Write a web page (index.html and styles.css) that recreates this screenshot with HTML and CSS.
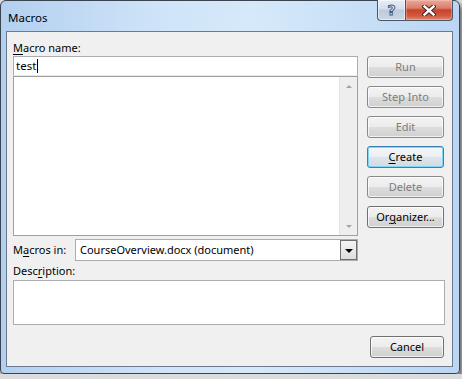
FILE: index.html
```html
<!DOCTYPE html>
<html>

<head>
  <title>Macros</title>
  <link rel="stylesheet" href="styles.css">
</head>

<body>
  <div class="window">
    <div class="titlebar">
      <span class="title">Macros</span>
      <div class="caption">
        <div class="cap-btn help"><span>?</span></div>
        <div class="cap-btn close">
          <svg width="14" height="11" viewBox="0 0 14 11">
            <path d="M2.5 1.5 L11.5 9.5 M11.5 1.5 L2.5 9.5" stroke="#3b2620" stroke-width="4.4" stroke-linecap="square" fill="none"/>
            <path d="M2.5 1.5 L11.5 9.5 M11.5 1.5 L2.5 9.5" stroke="#ffffff" stroke-width="2.4" stroke-linecap="square" fill="none"/>
          </svg>
        </div>
      </div>
    </div>

    <div class="client">
      <div class="main">
        <div class="left">
          <div class="label"><u>M</u>acro name:</div>
          <div class="name-input">test<span class="caret"></span></div>
          <div class="listbox">
            <div class="list-items"></div>
            <div class="scrollbar">
              <span class="arrow up"></span>
              <span class="arrow down"></span>
            </div>
          </div>
          <div class="macros-in">
            <div class="label inline">M<u>a</u>cros in:</div>
            <div class="combo">
              <span class="combo-text">CourseOverview.docx (document)</span>
              <span class="combo-btn"><span class="tri"></span></span>
            </div>
          </div>
        </div>
        <div class="buttons">
          <button class="btn" disabled>Run</button>
          <button class="btn" disabled>Step Into</button>
          <button class="btn" disabled>Edit</button>
          <button class="btn default"><u>C</u>reate</button>
          <button class="btn" disabled>Delete</button>
          <button class="btn">Or<u>g</u>anizer...</button>
        </div>
      </div>

      <div class="label desc-label">Desc<u>r</u>iption:</div>
      <div class="description"></div>

      <div class="footer">
        <button class="btn cancel">Cancel</button>
      </div>
    </div>
  </div>
</body>

</html>
```

FILE: styles.css
```css
body {
  margin: 0;
  background: #dcdcdc;
  font-family: "Noto Sans", "Open Sans", sans-serif;
  font-size: 11px;
  color: #000;
}

u {
  text-decoration-thickness: 1px;
  text-underline-offset: 2px;
}

.window {
  width: 460px;
  height: 374px;
  box-sizing: border-box;
  border: 1px solid #3a4350;
  border-radius: 6px 6px 4px 4px;
  padding: 0 6px 6px 5px;
  display: flex;
  flex-direction: column;
  background: linear-gradient(to right, #b3d0f0 0%, #cfe4f8 35%, #d6e9fa 55%, #bad6f3 100%);
  box-shadow: 2px 4px 5px rgba(0, 0, 0, 0.6);
}

/* title bar */
.titlebar {
  height: 30px;
  display: flex;
  justify-content: space-between;
  align-items: flex-start;
}

.title {
  padding: 9px 0 0 2px;
  line-height: 16px;
  font-size: 11.5px;
}

.caption {
  display: flex;
  margin-top: -1px;
  margin-right: 0;
}

.cap-btn {
  height: 21px;
  box-sizing: border-box;
  border: 1px solid #4b5664;
  border-top: none;
  display: flex;
  align-items: center;
  justify-content: center;
}

.help {
  width: 28px;
  border-right: none;
  border-radius: 0 0 0 4px;
  background: linear-gradient(#e6eef7 0%, #d3deeb 45%, #bccbdc 50%, #c9d7e6 100%);
  box-shadow: inset 0 0 0 1px rgba(255, 255, 255, 0.5);
}

.help span {
  font-family: "DejaVu Sans", sans-serif;
  font-weight: bold;
  font-size: 14px;
  line-height: 14px;
  color: #e9eef4;
  -webkit-text-stroke: 1px #4d5e72;
  margin-top: -1px;
}

.close {
  width: 48px;
  border-radius: 0 0 4px 0;
  background: linear-gradient(#e9a99c 0%, #dc7e6b 40%, #c7432c 50%, #d15a42 80%, #e08a72 100%);
  box-shadow: inset 0 0 0 1px rgba(255, 220, 210, 0.35);
}

/* client area */
.client {
  flex: 1;
  border: 1px solid #6b7a8c;
  background: #f0f0f0;
  padding: 8px 7px 8px 6px;
  display: flex;
  flex-direction: column;
}

.main {
  display: flex;
  gap: 9px;
}

.left {
  width: 345px;
  display: flex;
  flex-direction: column;
}

.label {
  height: 16px;
  line-height: 16px;
}

.name-input {
  height: 20px;
  box-sizing: border-box;
  border: 1px solid #abadb3;
  border-bottom-color: #e3e9ef;
  background: #fff;
  padding: 0 2px;
  line-height: 18px;
  font-size: 11.5px;
  display: flex;
  align-items: center;
}

.caret {
  width: 1px;
  height: 14px;
  background: #000;
  margin-left: 1px;
}

.listbox {
  height: 160px;
  box-sizing: border-box;
  border: 1px solid #a0a0a0;
  background: #fff;
  display: flex;
}

.list-items {
  flex: 1;
}

.scrollbar {
  width: 17px;
  background: #eeeeee;
  border-left: 1px solid #e4e4e4;
  display: flex;
  flex-direction: column;
  justify-content: space-between;
  align-items: center;
  padding: 8px 0 7px;
}

.arrow {
  width: 0;
  height: 0;
  border-left: 3px solid transparent;
  border-right: 3px solid transparent;
}

.arrow.up {
  border-bottom: 3px solid #a3a3a3;
}

.arrow.down {
  border-top: 3px solid #a3a3a3;
}

.macros-in {
  display: flex;
  align-items: center;
  margin-top: 3px;
}

.label.inline {
  width: 62px;
}

.combo {
  flex: 1;
  height: 22px;
  box-sizing: border-box;
  border: 1px solid #abadb3;
  background: #fff;
  display: flex;
  align-items: center;
}

.combo-text {
  flex: 1;
  padding-left: 4px;
  line-height: 18px;
}

.combo-btn {
  width: 17px;
  height: 20px;
  box-sizing: border-box;
  border: 1px solid #6f6f6f;
  background: linear-gradient(#f4f4f4, #dedede);
  display: flex;
  align-items: center;
  justify-content: center;
}

.tri {
  width: 0;
  height: 0;
  border-left: 4px solid transparent;
  border-right: 4px solid transparent;
  border-top: 4px solid #000;
  margin-top: 1px;
}

/* buttons */
.buttons {
  width: 77px;
  display: flex;
  flex-direction: column;
  gap: 8px;
  padding-top: 16px;
}

.btn {
  height: 22px;
  width: 77px;
  box-sizing: border-box;
  border: 1px solid #707070;
  border-radius: 3px;
  background: linear-gradient(#f3f3f3 0%, #ececec 50%, #dddddd 51%, #d0d0d0 100%);
  box-shadow: inset 0 0 0 1px rgba(255, 255, 255, 0.7);
  font-family: "Noto Sans", "Open Sans", sans-serif;
  font-size: 11px;
  line-height: 18px;
  color: #000;
  padding: 0;
}

.btn:disabled {
  color: #7d7d7d;
  border-color: #8a8a8a;
}

.btn.default {
  border-color: #3c7fb1;
  box-shadow: inset 0 0 0 1px #7fd7f8;
  background: linear-gradient(#f5f8fa 0%, #eaeff3 50%, #dde4e9 51%, #d3dbe1 100%);
}

.desc-label {
  height: 19px;
  line-height: 19px;
}

.description {
  height: 45px;
  box-sizing: border-box;
  border: 1px solid #abadb3;
  background: #fff;
}

.footer {
  display: flex;
  justify-content: flex-end;
  margin-top: 11px;
  padding-right: 1px;
}

.btn.cancel {
  width: 74px;
}
```
